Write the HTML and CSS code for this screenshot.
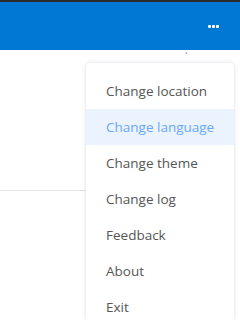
FILE: index.html
```html
<!DOCTYPE html>
<html>
	<head>
		<meta charset="utf-8" />
		<meta name="viewport" content="width=device-width, initial-scale=1" />
		<title>Menu</title>
		<link rel="stylesheet" href="styles.css">
	</head>
	<body>
		<header class="topbar">
			<span class="more">
				<i></i><i></i><i></i>
			</span>
		</header>
		<main class="content">
			<span class="tick">`</span>
			<div class="rule"></div>
		</main>
		<ul class="menu">
			<li>Change location</li>
			<li class="active">Change language</li>
			<li>Change theme</li>
			<li>Change log</li>
			<li>Feedback</li>
			<li>About</li>
			<li>Exit</li>
		</ul>
	</body>
</html>
```

FILE: styles.css
```css
html,
body {
	height: 320px;
	overflow: hidden;
}

body {
	margin: 0;
	background: #fff;
	font-family: "Open Sans", "Noto Sans", sans-serif;
	position: relative;
}

.topbar {
	height: 48px;
	border-top: 2px solid #2b2b2b;
	background: #0078d4;
	display: flex;
	align-items: center;
	justify-content: flex-end;
	padding-right: 21px;
}

.more {
	display: flex;
	gap: 1px;
	margin-top: 1px;
}

.more i {
	width: 3px;
	height: 3px;
	background: #fff;
	border-radius: 1px;
}

.content {
	position: relative;
	height: 270px;
}

.tick {
	position: absolute;
	left: 185px;
	top: 2px;
	font-size: 9px;
	line-height: 9px;
	color: #555;
}

.rule {
	position: absolute;
	top: 140px;
	left: 0;
	width: 90px;
	border-top: 1px solid #e3e3e3;
}

.menu {
	position: absolute;
	left: 86px;
	top: 63px;
	bottom: 0;
	width: 148px;
	margin: 0;
	padding: 10px 0 0;
	list-style: none;
	background: #fff;
	border-radius: 4px 4px 0 0;
	box-shadow: 0 0 4px rgba(80, 90, 140, 0.2);
	overflow: hidden;
}

.menu li {
	height: 36px;
	line-height: 36px;
	padding-left: 20px;
	font-size: 13.5px;
	color: #555;
}

.menu li.active {
	background: #ebf3fe;
	color: #6aa8f4;
}
```
